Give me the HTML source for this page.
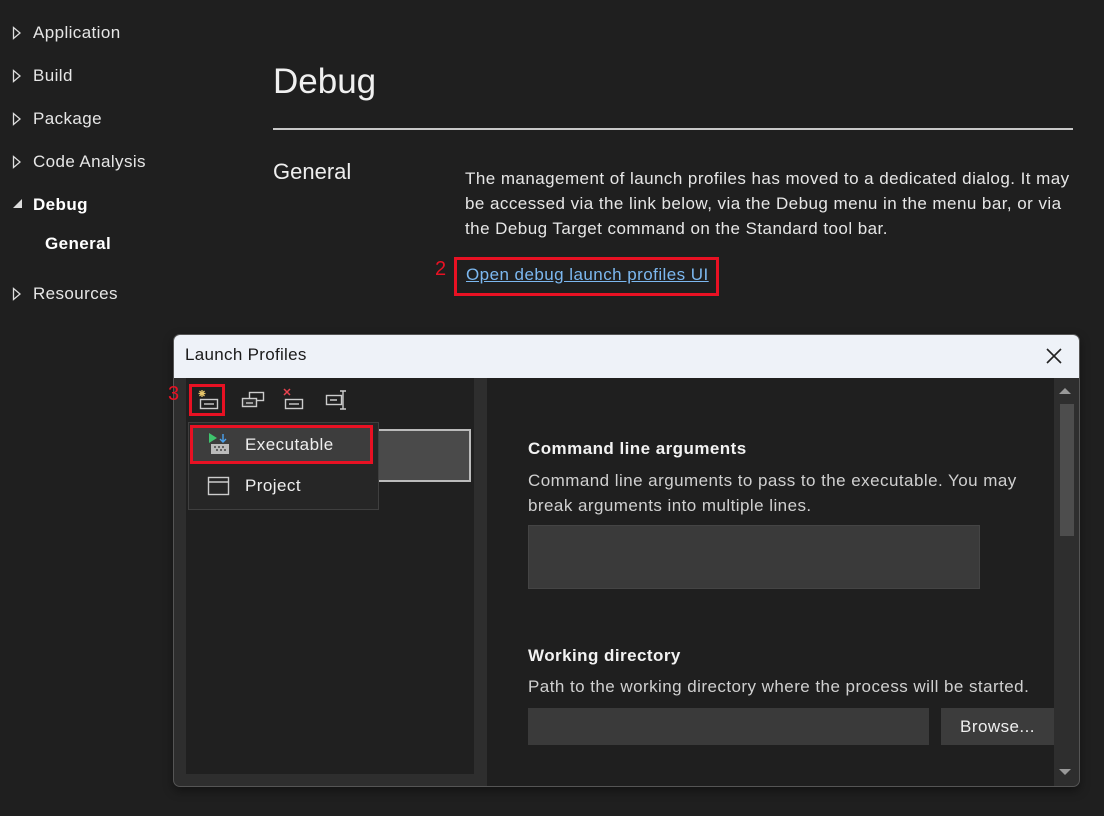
<!DOCTYPE html>
<html><head><style>
body{margin:0;width:1104px;height:816px;background:#1f1f1f;font-family:"Liberation Sans",sans-serif;color:#e8e8e8;position:relative;overflow:hidden}
.a{position:absolute;white-space:nowrap}
.nav{font-size:17px;color:#e6e6e6;letter-spacing:0.4px}
.t{letter-spacing:0.45px}
p{margin:0}
</style></head><body>
<svg class="a" style="left:12px;top:26px" width="10" height="14"><path d="M1.5 1.5v11l6.5-5.5z" fill="none" stroke="#ddd" stroke-width="1.3"/></svg><div class="a nav" style="left:33px;top:23px">Application</div>
<svg class="a" style="left:12px;top:69px" width="10" height="14"><path d="M1.5 1.5v11l6.5-5.5z" fill="none" stroke="#ddd" stroke-width="1.3"/></svg><div class="a nav" style="left:33px;top:66px">Build</div>
<svg class="a" style="left:12px;top:112px" width="10" height="14"><path d="M1.5 1.5v11l6.5-5.5z" fill="none" stroke="#ddd" stroke-width="1.3"/></svg><div class="a nav" style="left:33px;top:109px">Package</div>
<svg class="a" style="left:12px;top:155px" width="10" height="14"><path d="M1.5 1.5v11l6.5-5.5z" fill="none" stroke="#ddd" stroke-width="1.3"/></svg><div class="a nav" style="left:33px;top:152px">Code Analysis</div>
<div class="a" style="left:13px;top:199px;width:0;height:0;border-left:9px solid transparent;border-bottom:9px solid #ddd"></div>
<div class="a nav" style="left:33px;top:195px;font-weight:bold;color:#fff">Debug</div>
<div class="a nav" style="left:45px;top:234px;font-weight:bold;color:#fff">General</div>
<svg class="a" style="left:12px;top:287px" width="10" height="14"><path d="M1.5 1.5v11l6.5-5.5z" fill="none" stroke="#ddd" stroke-width="1.3"/></svg><div class="a nav" style="left:33px;top:284px">Resources</div>

<div class="a" style="left:273px;top:62px;font-size:35px;color:#f0f0f0">Debug</div>
<div class="a" style="left:273px;top:128px;width:800px;height:2px;background:#c8c8c8"></div>
<div class="a" style="left:273px;top:159px;font-size:22px;color:#eee">General</div>
<div class="a t" style="left:465px;top:166px;font-size:17px;line-height:25px;color:#e6e6e6">The management of launch profiles has moved to a dedicated dialog. It may<br>be accessed via the link below, via the Debug menu in the menu bar, or via<br>the Debug Target command on the Standard tool bar.</div>
<div class="a" style="left:435px;top:258px;font-size:20px;color:#e81123">2</div>
<div class="a" style="left:454px;top:257px;width:259px;height:33px;border:3px solid #e81123"></div>
<div class="a t" style="left:466px;top:265px;font-size:17px;color:#7cb8f0;text-decoration:underline">Open debug launch profiles UI</div>

<!-- dialog -->
<div class="a" style="left:173px;top:334px;width:905px;height:451px;background:#2e2e2e;border:1px solid #555;border-radius:7px;overflow:hidden;box-shadow:0 4px 10px rgba(0,0,0,.4)">
 <div class="a" style="left:0;top:0;width:905px;height:43px;background:#eef2f8"></div>
 <div class="a" style="left:11px;top:10px;font-size:17px;color:#1a1a1a;letter-spacing:0.3px">Launch Profiles</div>
 <svg class="a" style="left:871px;top:12px" width="18" height="18"><path d="M2 2L16 16M16 2L2 16" stroke="#222" stroke-width="1.6"/></svg>
 <div class="a" style="left:12px;top:43px;width:288px;height:396px;background:#202020"></div>
 <div class="a" style="left:313px;top:43px;width:567px;height:415px;background:#1f1f1f"></div>
 <div class="a" style="left:880px;top:43px;width:20px;height:415px;background:#2e2e2e"></div>
 <div class="a" style="left:886px;top:69px;width:14px;height:132px;background:#4d4d4d"></div>
 <div class="a" style="left:885px;top:53px;border-left:6px solid transparent;border-right:6px solid transparent;border-bottom:6px solid #999"></div>
 <div class="a" style="left:885px;top:434px;border-left:6px solid transparent;border-right:6px solid transparent;border-top:6px solid #999"></div>
 <div class="a t" style="left:354px;top:104px;font-size:17px;font-weight:bold;color:#f2f2f2">Command line arguments</div>
 <div class="a t" style="left:354px;top:133px;font-size:17px;line-height:25px;color:#d0d0d0">Command line arguments to pass to the executable. You may<br>break arguments into multiple lines.</div>
 <div class="a" style="left:354px;top:190px;width:450px;height:62px;background:#3a3a3a;border:1px solid #444"></div>
 <div class="a t" style="left:354px;top:311px;font-size:17px;font-weight:bold;color:#f2f2f2">Working directory</div>
 <div class="a t" style="left:354px;top:342px;font-size:17px;color:#d0d0d0">Path to the working directory where the process will be started.</div>
 <div class="a" style="left:354px;top:373px;width:401px;height:37px;background:#3a3a3a"></div>
 <div class="a t" style="left:767px;top:373px;width:113px;height:37px;background:#3c3c3c;color:#eee;font-size:17px;line-height:37px;text-align:center">Browse...</div>
 <div class="a" style="left:15px;top:49px;width:36px;height:32px;border:3px solid #e81123;box-sizing:border-box"></div>
 <svg class="a" style="left:22px;top:53px" width="24" height="24"><path d="M6 2v7M2.5 5.5h7M3.5 3l5 5M8.5 3l-5 5" stroke="#e8c66a" stroke-width="1.3"/><rect x="4.5" y="11.5" width="17" height="9" fill="none" stroke="#ccc" stroke-width="1.4"/><path d="M8 16h10" stroke="#ccc" stroke-width="1.4"/></svg>
 <svg class="a" style="left:66px;top:53px" width="26" height="24"><rect x="9.5" y="4.5" width="14" height="8" fill="none" stroke="#ccc" stroke-width="1.4"/><rect x="2.5" y="10.5" width="14" height="8" fill="#2e2e2e" stroke="#ccc" stroke-width="1.4"/><path d="M6 15h7" stroke="#ccc" stroke-width="1.4"/></svg>
 <svg class="a" style="left:107px;top:52px" width="26" height="26"><path d="M3 2l6 6M9 2L3 8" stroke="#e8434f" stroke-width="1.5"/><rect x="4.5" y="12.5" width="17" height="9" fill="none" stroke="#ccc" stroke-width="1.4"/><path d="M8 17h10" stroke="#ccc" stroke-width="1.4"/></svg>
 <svg class="a" style="left:150px;top:53px" width="26" height="24"><rect x="2.5" y="7.5" width="15" height="9" fill="none" stroke="#ccc" stroke-width="1.4"/><path d="M6 12h7M16 3h6M19 3v18M16 21h6" stroke="#ccc" stroke-width="1.4"/></svg>
 <div class="a" style="left:203px;top:94px;width:94px;height:53px;background:#4a4a4a;border:2px solid #bbb;box-sizing:border-box"></div>
 <div class="a" style="left:14px;top:87px;width:189px;height:86px;background:#262626;border:1px solid #3f3f3f"></div>
 <div class="a" style="left:16px;top:90px;width:183px;height:39px;background:#3d3d3d;border:3px solid #e81123;box-sizing:border-box"></div>
 <svg class="a" style="left:33px;top:97px" width="24" height="24"><path d="M2 1v10l8-5z" fill="#3ec46d"/><path d="M16 2v8M13 7l3 3 3-3" stroke="#4aa3f0" stroke-width="1.4" fill="none"/><rect x="4" y="12" width="18" height="10" fill="#bbb"/><path d="M7 15h2M11 15h2M15 15h2M9 18h2M13 18h2M17 18h2" stroke="#444" stroke-width="1.5"/></svg>
 <div class="a t" style="left:71px;top:100px;font-size:17px;color:#eee">Executable</div>
 <svg class="a" style="left:33px;top:140px" width="24" height="22"><rect x="1.5" y="2.5" width="20" height="17" fill="none" stroke="#ccc" stroke-width="1.4"/><path d="M1.5 7h20" stroke="#ccc" stroke-width="1.4"/></svg>
 <div class="a t" style="left:71px;top:141px;font-size:17px;color:#eee">Project</div>
</div>
<div class="a" style="left:168px;top:383px;font-size:20px;color:#e81123;z-index:5">3</div>
</body></html>
